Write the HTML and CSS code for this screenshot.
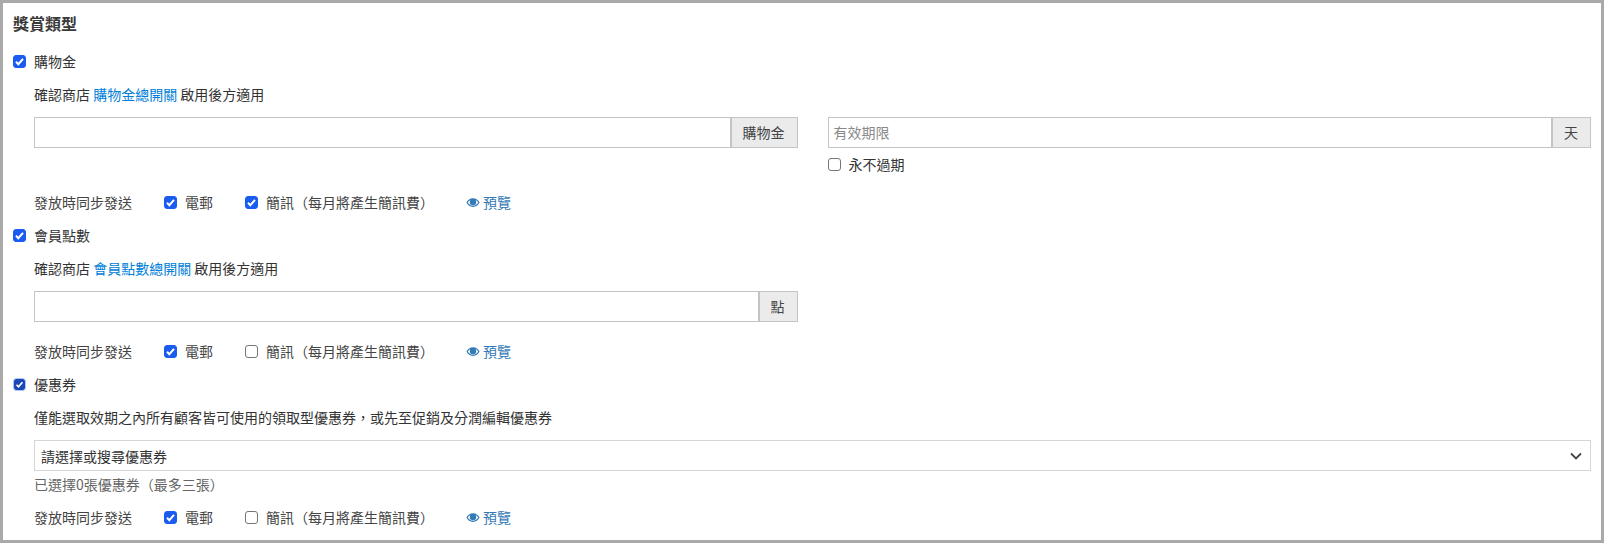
FILE: index.html
```html
<!DOCTYPE html>
<html lang="zh-Hant">
<head>
<meta charset="utf-8">
<title>獎賞類型</title>
<link rel="stylesheet" href="styles.css">
</head>
<body>
<main class="panel">
  <h2 class="title">獎賞類型</h2>

  <section class="reward reward-credit">
    <label class="head"><input type="checkbox" class="check" checked><span>購物金</span></label>
    <div class="body">
      <p class="note">確認商店 <a href="#" class="link">購物金總開關</a> 啟用後方適用</p>
      <div class="fields">
        <div class="group"><input type="text" class="input"><span class="addon">購物金</span></div>
        <div>
          <div class="group"><input type="text" class="input" placeholder="有效期限"><span class="addon">天</span></div>
          <label class="forever"><input type="checkbox" class="check"><span>永不過期</span></label>
        </div>
      </div>
      <div class="sync sync-credit">
        <span class="sync-label">發放時同步發送</span>
        <label class="opt opt-mail"><input type="checkbox" class="check" checked><span>電郵</span></label>
        <label class="opt opt-sms"><input type="checkbox" class="check" checked><span>簡訊（每月將產生簡訊費）</span></label>
        <a href="#" class="preview"><svg class="eye" viewBox="0 0 16 12"><path d="M8 1C4.600 1 1.900 3 .5 6c1.400 3 4.100 5 7.500 5s6.100-2 7.500-5C14.100 3 11.400 1 8 1zm0 8.700C5.500 9.700 3.300 8.300 2 6c.8-1.300 1.800-2.300 3.100-3A3.600 3.600 0 0 0 4.300 5.400 3.700 3.700 0 0 0 11.700 5.400c0-.9-.3-1.700-.8-2.400 1.300.7 2.300 1.700 3.100 3-1.300 2.300-3.500 3.700-6 3.700z"/><circle cx="6.600" cy="4.400" r="1.100"/></svg><span>預覽</span></a>
      </div>
    </div>
  </section>

  <section class="reward reward-points">
    <label class="head"><input type="checkbox" class="check" checked><span>會員點數</span></label>
    <div class="body">
      <p class="note">確認商店 <a href="#" class="link">會員點數總開關</a> 啟用後方適用</p>
      <div class="fields">
        <div class="group"><input type="text" class="input"><span class="addon">點</span></div>
      </div>
      <div class="sync sync-points">
        <span class="sync-label">發放時同步發送</span>
        <label class="opt opt-mail"><input type="checkbox" class="check" checked><span>電郵</span></label>
        <label class="opt opt-sms"><input type="checkbox" class="check"><span>簡訊（每月將產生簡訊費）</span></label>
        <a href="#" class="preview"><svg class="eye" viewBox="0 0 16 12"><path d="M8 1C4.600 1 1.900 3 .5 6c1.400 3 4.100 5 7.500 5s6.100-2 7.500-5C14.100 3 11.400 1 8 1zm0 8.700C5.500 9.700 3.300 8.300 2 6c.8-1.300 1.800-2.300 3.100-3A3.600 3.600 0 0 0 4.300 5.400 3.700 3.700 0 0 0 11.700 5.400c0-.9-.3-1.700-.8-2.400 1.300.7 2.300 1.700 3.100 3-1.300 2.300-3.500 3.700-6 3.700z"/><circle cx="6.600" cy="4.400" r="1.100"/></svg><span>預覽</span></a>
      </div>
    </div>
  </section>

  <section class="reward reward-coupon">
    <label class="head"><input type="checkbox" class="check check-focus" checked><span>優惠券</span></label>
    <div class="body">
      <p class="note">僅能選取效期之內所有顧客皆可使用的領取型優惠券，或先至促銷及分潤編輯優惠券</p>
      <div class="select">
        <span>請選擇或搜尋優惠券</span>
        <svg class="chevron" viewBox="0 0 12 8"><path d="M1 1.500l5 5 5-5"/></svg>
      </div>
      <p class="helper">已選擇0張優惠券（最多三張）</p>
      <div class="sync sync-coupon">
        <span class="sync-label">發放時同步發送</span>
        <label class="opt opt-mail"><input type="checkbox" class="check" checked><span>電郵</span></label>
        <label class="opt opt-sms"><input type="checkbox" class="check"><span>簡訊（每月將產生簡訊費）</span></label>
        <a href="#" class="preview"><svg class="eye" viewBox="0 0 16 12"><path d="M8 1C4.600 1 1.900 3 .5 6c1.400 3 4.100 5 7.500 5s6.100-2 7.500-5C14.100 3 11.400 1 8 1zm0 8.700C5.500 9.700 3.300 8.300 2 6c.8-1.300 1.800-2.300 3.100-3A3.600 3.600 0 0 0 4.300 5.400 3.700 3.700 0 0 0 11.700 5.400c0-.9-.3-1.700-.8-2.400 1.300.7 2.300 1.700 3.100 3-1.300 2.300-3.500 3.700-6 3.700z"/><circle cx="6.600" cy="4.400" r="1.100"/></svg><span>預覽</span></a>
      </div>
    </div>
  </section>
</main>
</body>
</html>
```

FILE: styles.css
```css
* { box-sizing: border-box; }
html, body { margin: 0; padding: 0; background: #fff; }
body {
  font-family: "Noto Sans CJK TC", "Liberation Sans", sans-serif;
  font-size: 14px;
  line-height: 20px;
  color: #333;
}
.panel {
  height: 543px;
  border: 3px solid #a9a9a9;
  padding: 9px 10px 0;
  overflow: hidden;
}
.title {
  margin: 0 0 17px;
  font-size: 16px;
  line-height: 22px;
  font-weight: 700;
  color: #3a3a3a;
}
.head, .opt, .forever {
  display: flex;
  align-items: center;
  height: 20px;
}
.head { gap: 8px; }
.check {
  appearance: none;
  -webkit-appearance: none;
  flex: none;
  width: 13px;
  height: 13px;
  margin: 0;
  border: 1px solid #767676;
  border-radius: 3px;
  background: #fff;
}
.check:checked {
  border-color: #1a5cf0;
  background: #1a5cf0 url("data:image/svg+xml,%3Csvg xmlns='http://www.w3.org/2000/svg' viewBox='0 0 13 13'%3E%3Cpath d='M3 6.800l2.300 2.400L10 3.800' fill='none' stroke='%23fff' stroke-width='2'/%3E%3C/svg%3E") center / 13px 13px no-repeat;
}
.check-focus:checked {
  width: 11px;
  height: 11px;
  margin: 0 1px;
  border-color: #1c47b8;
  background-color: #1c47b8;
  background-size: 11px 11px;
  border-radius: 2px;
  outline: 1px solid #a9c8f2;
}
.body { padding-left: 21px; }
.note { margin: 13px 0; color: #333; }
.link { color: #0080d8; text-decoration: none; }
.fields {
  display: grid;
  grid-template-columns: 1fr 1fr;
  column-gap: 30px;
  align-items: start;
}
.group { display: flex; height: 31px; }
.input {
  flex: 1;
  min-width: 0;
  height: 31px;
  border: 1px solid #c4c4c4;
  border-radius: 0;
  padding: 0 5px 2px;
  margin: 0;
  font: inherit;
  color: #333;
  background: #fff;
  outline: none;
}
.input::placeholder { color: #8a8a8a; opacity: 1; }
.addon {
  flex: none;
  display: flex;
  align-items: center;
  padding: 0 12px 2px;
  height: 31px;
  border: 1px solid #c4c4c4;
  border-left: 0;
  background: #ebebeb;
  color: #444;
  box-shadow: inset 1px 0 0 #c4c4c4;
}
.forever { gap: 8px; margin-top: 6px; }
.sync { display: flex; align-items: center; height: 20px; color: #444; }
.sync-credit { margin-top: 18px; }
.sync-points { margin-top: 19px; }
.sync-coupon { margin-top: 13px; }
.sync-label { width: 130px; flex: none; }
.opt { gap: 8px; }
.opt-mail { width: 81px; flex: none; }
.opt-sms { width: 221px; flex: none; }
.preview {
  display: flex;
  align-items: center;
  gap: 3px;
  color: #337ab7;
  text-decoration: none;
}
.eye { width: 14px; height: 11px; fill: #337ab7; flex: none; }
.reward-points { margin-top: 13px; }
.reward-coupon { margin-top: 13px; }
.select {
  display: flex;
  align-items: center;
  justify-content: space-between;
  height: 31px;
  border: 1px solid #d6d6d6;
  padding: 0 8px 0 6px;
  color: #333;
}
.chevron {
  width: 12px;
  height: 8px;
  fill: none;
  stroke: #444;
  stroke-width: 1.800;
}
.helper { margin: 3px 0 0; color: #666; }
```
